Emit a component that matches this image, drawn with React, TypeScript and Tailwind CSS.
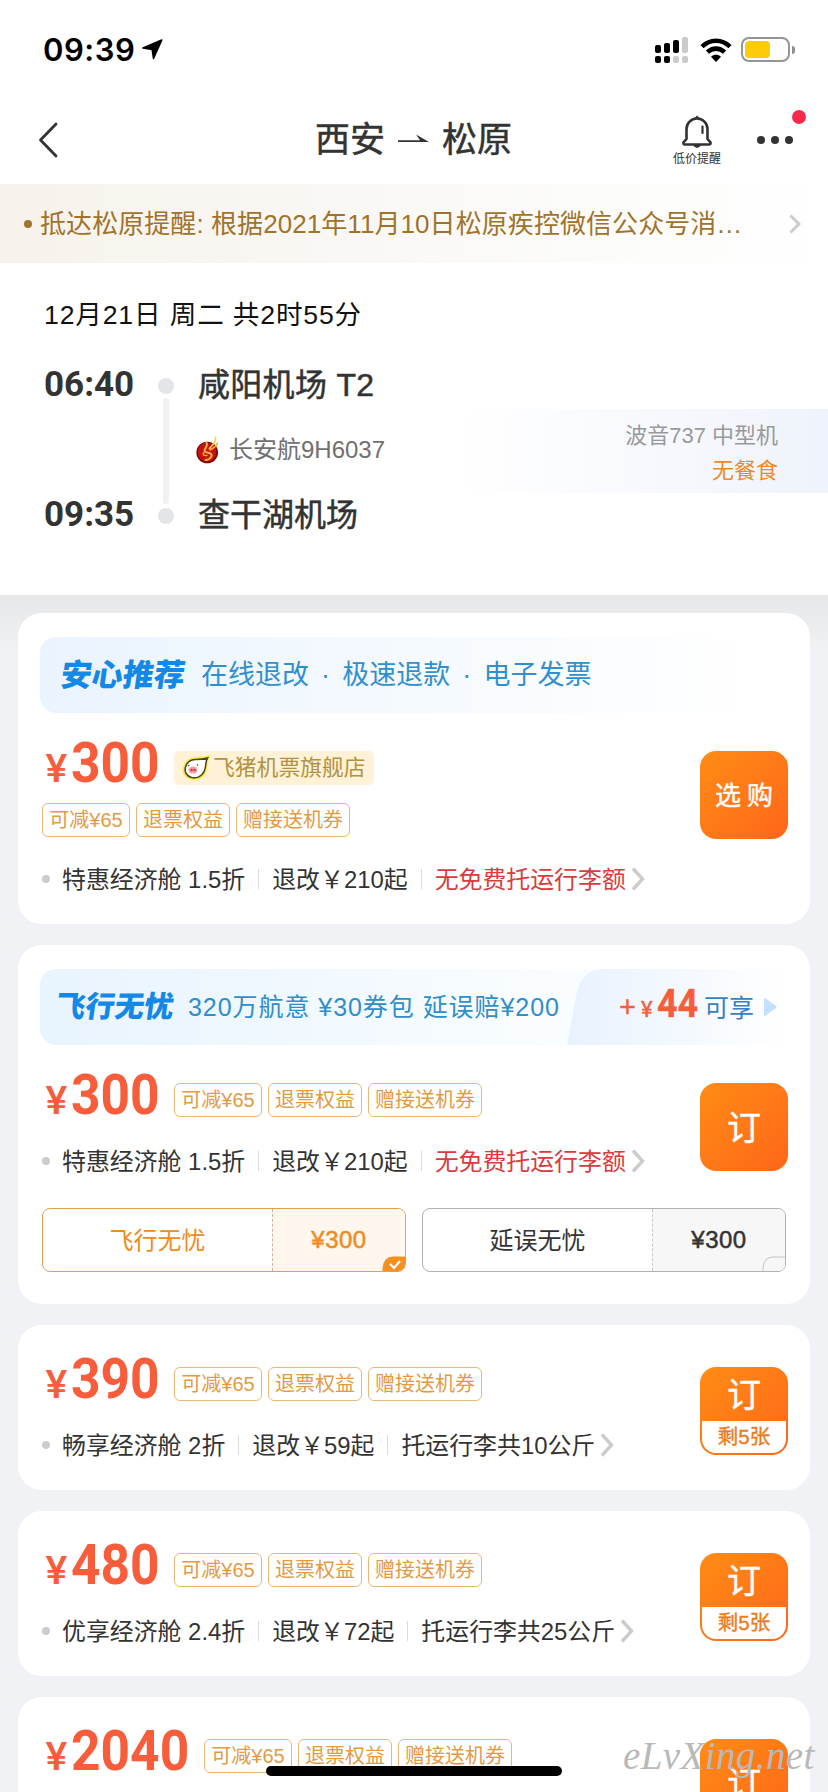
import type { ReactNode } from "react";
import { clsx } from "clsx";

const COUPONS = [
  { text: "可减¥65", width: "w-[88px]" },
  { text: "退票权益", width: "w-[94px]" },
  { text: "赠接送机券", width: "w-[114px]" },
];

function StatusBar() {
  return (
    <div className="flex h-[99px] items-center justify-between pl-[43px] pr-[33px]">
      <div className="flex items-center gap-[8px]">
        <span className="w-[91px] whitespace-nowrap font-[Inter,sans-serif] text-[31px] leading-none font-semibold tracking-[0.5px] text-black">
          09:39
        </span>
        <svg className="h-[21px] w-[21px]" viewBox="0 0 21 21">
          <path d="M19.8 1L11.5 19.5 10.2 10.5 1 8.9Z" fill="#000" stroke="#000" strokeWidth="1.6" strokeLinejoin="round" />
        </svg>
      </div>
      <div className="flex items-center">
        <svg className="h-[26px] w-[33px]" viewBox="0 0 33 26">
          <g fill="#000">
            <rect x="0" y="8" width="6" height="8" rx="2" />
            <rect x="9" y="6" width="6" height="10" rx="2" />
            <rect x="18" y="3" width="6" height="13" rx="2" />
            <rect x="0" y="19" width="6" height="7" rx="2" />
            <rect x="9" y="19" width="6" height="7" rx="2" />
          </g>
          <g fill="#cbcbcb">
            <rect x="27" y="0" width="6" height="16" rx="2" />
            <rect x="18" y="19" width="6" height="7" rx="2" />
            <rect x="27" y="19" width="6" height="7" rx="2" />
          </g>
        </svg>
        <svg className="ml-[12px] h-[24px] w-[32px]" viewBox="0 0 32 24" fill="none" stroke="#000" strokeWidth="4.6">
          <path d="M2 8.6C10 0.8 22 0.8 30 8.6" />
          <path d="M7.4 14.2C12.4 9.4 19.6 9.4 24.6 14.2" />
          <path d="M16 24l-5-5.2c3-2.6 7-2.6 10 0z" fill="#000" stroke="none" />
        </svg>
        <div className="ml-[9px] h-[25px] w-[49px] rounded-[8px] border-2 border-[#959595] p-[2px]">
          <div className="h-[17px] w-[25px] rounded-[4px] bg-[#fccc0a]" />
        </div>
        <div className="ml-[2px] h-[8px] w-[3px] rounded-r-full bg-[#8e8e8e]" />
      </div>
    </div>
  );
}

function NavBar() {
  return (
    <div className="relative flex h-[85px] items-start pl-[38px]">
      <svg className="mt-[23px] h-[36px] w-[21px]" viewBox="0 0 21 36" fill="none" stroke="#333" strokeWidth="2.8" strokeLinecap="round" strokeLinejoin="round">
        <path d="M18 2L2.5 18 18 34" />
      </svg>
      <div className="ml-[256px] mt-[21px] flex h-[40px] items-center text-[35px] leading-[40px] text-[#333] [-webkit-text-stroke:0.5px_#333]">
        <span className="w-[70px]">西安</span>
        <svg className="mx-[13px] -mt-[3px] h-[10px] w-[31px]" viewBox="0 0 31 10" fill="#333">
          <path d="M0 6.2H22L18 0.5 31 8H0z" />
        </svg>
        <span className="w-[70px]">松原</span>
      </div>
      <div className="ml-[161px] mt-[16px] flex w-[48px] flex-col items-center">
        <svg className="h-[34px] w-[30px]" viewBox="0 0 30 34" fill="none" stroke="#333" strokeWidth="2.6" strokeLinejoin="round">
          <path d="M4.5 24V14a10.5 10.5 0 0 1 21 0v10l3 3.4q.4 2.1-1.5 2.1H3q-1.9 0-1.5-2.1z" />
          <path d="M20.5 11.5v6.5" strokeLinecap="round" strokeWidth="2.2" />
          <path d="M15 0.6l3 3h-6zM10.8 30h8.4Q15 36 10.8 30z" fill="#333" stroke="none" />
        </svg>
        <span className="mt-[2px] whitespace-nowrap text-[12px] leading-[16px] text-[#333]">低价提醒</span>
      </div>
      <div className="ml-[36px] mt-[37px] flex gap-[6px]">
        <i className="h-2 w-2 rounded-full bg-[#333]" />
        <i className="h-2 w-2 rounded-full bg-[#333]" />
        <i className="h-2 w-2 rounded-full bg-[#333]" />
      </div>
      <i className="absolute left-[792px] top-[11px] h-[14px] w-[14px] rounded-full bg-[#f9294d]" />
    </div>
  );
}

function Notice() {
  return (
    <div className="flex h-[79px] items-center bg-linear-to-r from-[#f7f2eb] via-[#faf9f6] to-white pl-[24px] text-[#a0732c]">
      <i className="h-2 w-2 rounded-full bg-current" />
      <span className="ml-[8px] w-[749px] whitespace-nowrap pt-px text-[26px] leading-[36px] tracking-[0.07px]">
        抵达松原提醒: 根据2021年11月10日松原疾控微信公众号消…
      </span>
      <svg className="h-[20px] w-[12px]" viewBox="0 0 12 20" fill="none" stroke="#ccc" strokeWidth="3">
        <path d="M1.5 1.5L10 10 1.5 18.5" />
      </svg>
    </div>
  );
}

function AirlineLogo() {
  return (
    <svg className="h-[28px] w-[23px]" viewBox="0 0 23 28">
      <circle cx="11.2" cy="16.5" r="10.8" fill="#7d0605" />
      <circle cx="11" cy="16" r="9.4" fill="#c3140c" />
      <g fill="none" stroke="#fbae42" strokeLinecap="round">
        <path d="M19.5 1.5C20 7 17 8 13.5 12.5" strokeWidth="1.8" stroke="#ffd257" />
        <path d="M21.5 7C20.500 11 17 12 14 14" strokeWidth="1.5" />
        <path d="M10.500 7C12.500 9 9 12 8.500 14.500S13 16 15 18 13.500 24.500 9.500 24" strokeWidth="2" />
        <path d="M8 16.500C6 18 7.500 20 11 19.500" strokeWidth="1.4" />
      </g>
    </svg>
  );
}

function Flight() {
  return (
    <div className="h-[332px] bg-white pt-[34px]">
      <div className="pl-[44px] text-[26.6px] leading-[36px] tracking-[0.85px] whitespace-nowrap text-[#111]">12月21日 周二 共2时55分</div>
      <div className="mt-[32px] flex">
        <div className="flex w-[113px] flex-col gap-[90px] pl-[44px] font-[Roboto,sans-serif] text-[35px] leading-[40px] font-bold text-[#333]">
          <span>06:40</span>
          <span>09:35</span>
        </div>
        <div className="ml-[45px] flex w-4 flex-col items-center pt-[13px]">
          <i className="h-4 w-4 rounded-full bg-[#e3e5e8]" />
          <i className="my-[4px] h-[106px] w-[6px] rounded-full bg-[#f1f1f2]" />
          <i className="h-4 w-4 rounded-full bg-[#e3e5e8]" />
        </div>
        <div className="ml-[24px] flex w-[262px] flex-col text-[#333]">
          <span className="text-[32px] leading-[40px] tracking-[0.3px] whitespace-nowrap [-webkit-text-stroke:0.5px_#333]">咸阳机场 T2</span>
          <div className="my-[25px] -ml-[2px] flex h-[40px] items-center">
            <AirlineLogo />
            <span className="ml-[10px] whitespace-nowrap text-[24px] leading-none text-[#707070]">长安航9H6037</span>
          </div>
          <span className="text-[32px] leading-[40px] whitespace-nowrap [-webkit-text-stroke:0.5px_#333]">查干湖机场</span>
        </div>
        <div className="mt-[44px] flex h-[84px] flex-1 flex-col bg-linear-to-r from-white to-[#eff3fb] pt-[9px] pr-[50px] text-right text-[22px] leading-[35px]">
          <span className="text-[#999]">波音737 中型机</span>
          <span className="text-[#ef8a2c]">无餐食</span>
        </div>
      </div>
    </div>
  );
}

function Card({ className, children }: { className: string; children: ReactNode }) {
  return <section className={clsx("flex flex-col rounded-[24px] bg-white px-[22px]", className)}>{children}</section>;
}

function Price({ value, className }: { value: string; className: string }) {
  return (
    <div className={clsx("flex shrink-0 items-baseline text-[#f75d3b]", className)}>
      <span className="w-[31px] origin-left scale-x-108 pl-[5px] font-[Roboto,sans-serif] text-[38px] leading-[56px] font-medium">¥</span>
      <span className="origin-left scale-x-92 font-[Roboto,sans-serif] text-[56px] leading-[56px] font-bold">{value}</span>
    </div>
  );
}

function Coupons() {
  return (
    <div className="flex gap-[6px]">
      {COUPONS.map((c) => (
        <span
          key={c.text}
          className={clsx(
            "flex h-[34px] items-center justify-center rounded-[6px] border border-[#e8b878] text-[20px] leading-none whitespace-nowrap text-[#e29a45]",
            c.width
          )}
        >
          {c.text}
        </span>
      ))}
    </div>
  );
}

function Divider() {
  return <i className="mx-[13px] h-[20px] w-px bg-[#dcdcdc]" />;
}

function Info({ cabin, change, bag, noBag }: { cabin: string; change: string; bag: string; noBag?: boolean }) {
  return (
    <div className="flex h-[34px] items-center pl-[2px] text-[23.9px] leading-[32px] whitespace-nowrap text-[#333]">
      <i className="mr-[12px] h-2 w-2 rounded-full bg-[#ccc]" />
      <span className="pt-[2px]">{cabin}</span>
      <Divider />
      <span className="pt-[2px]">{change}</span>
      <Divider />
      <span className={clsx("pt-[2px]", noBag && "text-[#d63d3d]")}>{bag}</span>
      <svg className="ml-[5px] h-[24px] w-[14px]" viewBox="0 0 14 24" fill="none" stroke="#ccc" strokeWidth="3.4">
        <path d="M2 1.5L11.5 12 2 22.5" />
      </svg>
    </div>
  );
}

function BuyButton({ text, left }: { text: string; left?: string }) {
  return (
    <button className="flex h-[88px] w-[88px] shrink-0 flex-col rounded-[16px] bg-linear-to-br from-[#ff8c14] to-[#ff651a] text-white">
      <span
        className={clsx(
          "flex w-full items-center justify-center [-webkit-text-stroke:0.4px_#fff]",
          left ? "h-[54px] pt-[2px] text-[34px] leading-none" : "h-[88px] pt-[3px]",
          !left && (text.length > 1 ? "gap-[6px] text-[26px]" : "text-[34px]")
        )}
      >
        {text.split("").map((t) => (
          <span key={t}>{t}</span>
        ))}
      </span>
      {left && (
        <span className="mx-[2px] flex h-[32px] w-[84px] items-center justify-center rounded-b-[14px] bg-white pt-px text-[20.5px] leading-none text-[#ea7c1e] [-webkit-text-stroke:0.4px_#ea7c1e]">
          {left}
        </span>
      )}
    </button>
  );
}

function PigLogo() {
  return (
    <svg className="h-[28px] w-[30px]" viewBox="0 0 30 28">
      <path d="M29 1Q27 8 26 15C25 24 17 27 11 26S0 20 2 13 9 3 15 3Q22 3 29 1z" fill="#f5ec4c" />
      <path d="M26.500 4C24 8 25.500 12 23.500 16.500 21 23 15 24.500 10.500 23.500S3 18 4.500 13 10 5.500 15 5.500Q21 5.500 26.500 4z" fill="#fff" stroke="#4a4420" strokeWidth="1.500" />
      <ellipse cx="12" cy="16" rx="4.400" ry="3.600" fill="#f2a3a0" />
      <circle cx="10.600" cy="16" r="1.200" fill="#c8384e" />
      <circle cx="13.600" cy="16" r="1.200" fill="#c8384e" />
      <circle cx="7.800" cy="11.500" r="0.800" fill="#444" />
      <circle cx="16.500" cy="11" r="0.800" fill="#444" />
    </svg>
  );
}

function Option({ name, active }: { name: string; active?: boolean }) {
  return (
    <div
      className={clsx(
        "relative flex h-[64px] w-[364px] overflow-hidden rounded-[8px] border text-[24px]",
        active ? "border-[#e0a050] text-[#ee8c22]" : "border-[#b0b0b0] text-[#333]"
      )}
    >
      <span className="flex w-[229px] items-center justify-center pt-px">{name}</span>
      <span
        className={clsx(
          "flex flex-1 items-center justify-center border-l border-dashed tracking-[0.5px] [-webkit-text-stroke:0.5px_currentColor]",
          active ? "border-[#d8b0a0] bg-[#fff7ee]" : "border-[#c8c8c8] bg-[#f7f7f7]"
        )}
      >
        ¥300
      </span>
      <svg className="absolute -right-px -bottom-px h-[16px] w-[24px]" viewBox="0 0 24 16" fill="none">
        <path
          d="M1 16V12Q2 1 11 1H24V16Z"
          fill={active ? "#f5901e" : "#f7f7f7"}
          stroke={active ? "#f5901e" : "#c4c4c4"}
        />
        {active && <path d="M8 8l4 4 6-7" stroke="#fff" strokeWidth="2.2" />}
      </svg>
    </div>
  );
}

function TicketCard({ price, cabin, change, bag }: { price: string; cabin: string; change: string; bag: string }) {
  return (
    <Card className="h-[165px] pt-[26px]">
      <div className="flex items-start justify-between">
        <div>
          <div className="flex h-[50px]">
            <Price value={price} className="w-[134px]" />
            <div className="pt-[16px]">
              <Coupons />
            </div>
          </div>
          <div className="mt-[27px]">
            <Info cabin={cabin} change={change} bag={bag} />
          </div>
        </div>
        <div className="pt-[16px]">
          <BuyButton text="订" left="剩5张" />
        </div>
      </div>
    </Card>
  );
}

export default function App() {
  return (
    <div className="relative h-[1792px] w-[828px] overflow-hidden bg-[#f1f2f5] font-['Liberation_Sans','Noto_Sans_CJK_SC',sans-serif]">
      <header className="bg-white">
        <StatusBar />
        <NavBar />
        <Notice />
        <Flight />
      </header>

      <main className="flex flex-col gap-[21px] bg-linear-to-b from-[#e6e7e8] to-[#f1f2f5] to-[60px] px-[18px] pt-[18px]">
        <Card className="h-[311px] pt-[24px]">
          <div className="flex h-[76px] items-center rounded-[16px] bg-linear-to-r from-[#eaf4fe] to-white to-95% pl-[21px] whitespace-nowrap">
            <span className="w-[140px] -skew-x-8 text-[31px] leading-none font-black text-[#1488e6]">安心推荐</span>
            <span className="text-[27px] leading-none [word-spacing:4.6px] text-[#3090cf]">在线退改 · 极速退款 · 电子发票</span>
          </div>
          <div className="flex justify-between">
            <div>
              <div className="mt-[22px] flex h-[50px]">
                <Price value="300" className="w-[134px]" />
                <div className="mt-[16px] flex h-[34px] w-[200px] items-center rounded-[5px] bg-[#fff2d6] pl-[7px] text-[21.8px] leading-none whitespace-nowrap text-[#b29345]">
                  <PigLogo />
                  <span className="ml-[2px]">飞猪机票旗舰店</span>
                </div>
              </div>
              <div className="mt-[18px] pl-[2px]">
                <Coupons />
              </div>
              <div className="mt-[25px]">
                <Info cabin="特惠经济舱 1.5折" change="退改￥210起" bag="无免费托运行李额" noBag />
              </div>
            </div>
            <div className="pt-[38px]">
              <BuyButton text="选购" />
            </div>
          </div>
        </Card>

        <Card className="h-[359px] pt-[24px]">
          <div className="relative flex h-[76px] items-center rounded-[16px] bg-linear-to-r from-[#e8f4fe] to-[#fafdff] to-70% whitespace-nowrap">
            <span className="ml-[16px] w-[132px] -skew-x-8 text-[29.5px] leading-none font-black text-[#1488e6]">飞行无忧</span>
            <span className="w-[381px] pt-px text-[25px] leading-none tracking-[0.95px] text-[#2f8ecb]">320万航意 ¥30券包 延误赔¥200</span>
            <svg className="absolute left-[527px] top-0 h-[76px] w-[222px]" viewBox="0 0 222 76">
              <defs>
                <linearGradient id="tab">
                  <stop offset="0" stopColor="#e8f2fe" />
                  <stop offset="1" stopColor="#fff" />
                </linearGradient>
              </defs>
              <path d="M0 76L9 27Q14 0 36 0H222V76Z" fill="url(#tab)" />
            </svg>
            <div className="relative ml-[50px] -mt-[5px] flex items-baseline text-[#f75d3b] [-webkit-text-stroke:0.4px_currentColor]">
              <span className="w-[22px] text-[29px] leading-none">+</span>
              <span className="w-[16px] font-[Roboto,sans-serif] text-[22px] leading-none">¥</span>
              <span className="w-[47px] origin-left scale-x-92 font-[Roboto,sans-serif] text-[39px] leading-none font-bold">44</span>
              <span className="text-[25px] leading-none text-[#3a7fc0] [-webkit-text-stroke:0]">可享</span>
            </div>
            <svg className="relative ml-[10px] h-[18px] w-[13px]" viewBox="0 0 13 18">
              <path d="M0 1Q0 0 1 0L12 8q1 1 0 2L1 18Q0 18 0 17Z" fill="#c4e0fa" />
            </svg>
          </div>
          <div className="flex justify-between">
            <div>
              <div className="mt-[22px] flex h-[50px]">
                <Price value="300" className="w-[134px]" />
                <div className="pt-[16px]">
                  <Coupons />
                </div>
              </div>
              <div className="mt-[27px]">
                <Info cabin="特惠经济舱 1.5折" change="退改￥210起" bag="无免费托运行李额" noBag />
              </div>
            </div>
            <div className="pt-[38px]">
              <BuyButton text="订" />
            </div>
          </div>
          <div className="mt-[30px] flex gap-[16px] pl-[2px]">
            <Option name="飞行无忧" active />
            <Option name="延误无忧" />
          </div>
        </Card>

        <TicketCard price="390" cabin="畅享经济舱 2折" change="退改￥59起" bag="托运行李共10公斤" />
        <TicketCard price="480" cabin="优享经济舱 2.4折" change="退改￥72起" bag="托运行李共25公斤" />

        <Card className="h-[165px] pt-[26px]">
          <div className="flex justify-between">
            <div className="flex h-[50px]">
              <Price value="2040" className="w-[164px]" />
              <div className="pt-[16px]">
                <Coupons />
              </div>
            </div>
            <div className="pt-[16px]">
              <BuyButton text="订" />
            </div>
          </div>
        </Card>
      </main>

      <div className="absolute left-[266px] top-[1766px] h-[10px] w-[296px] rounded-full bg-black" />
      <span className="absolute left-[623px] top-[1734px] font-['Liberation_Serif',serif] text-[39px] leading-[44px] tracking-[0.4px] whitespace-nowrap text-[#b9b9b9] italic">
        eLvXing.net
      </span>
    </div>
  );
}
